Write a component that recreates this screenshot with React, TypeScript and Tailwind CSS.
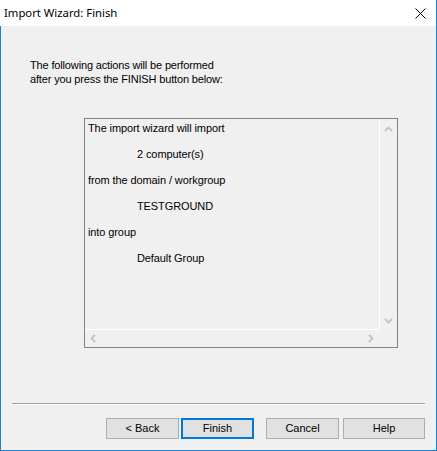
import React from 'react';

const ui = { fontFamily: '"Liberation Sans", Arial, sans-serif' };

const Chevron: React.FC<{ dir: 'up' | 'down' | 'left' | 'right' }> = ({ dir }) => {
  const pts: Record<string, string> = {
    up: '1,6 4.5,2.5 8,6',
    down: '1,3 4.5,6.5 8,3',
    left: '6,1 2.5,4.5 6,8',
    right: '3,1 6.5,4.5 3,8',
  };
  return (
    <svg width="9" height="9" viewBox="0 0 9 9" className="block">
      <polyline points={pts[dir]} fill="none" stroke="#c3c3c3" strokeWidth="1.8" />
    </svg>
  );
};

const rows: { text: string; indent?: boolean }[] = [
  { text: 'The import wizard will import' },
  { text: '' },
  { text: '2 computer(s)', indent: true },
  { text: '' },
  { text: 'from the domain / workgroup' },
  { text: '' },
  { text: 'TESTGROUND', indent: true },
  { text: '' },
  { text: 'into group' },
  { text: '' },
  { text: 'Default Group', indent: true },
];

const WizButton: React.FC<{ label: string; primary?: boolean; wide?: boolean }> = ({ label, primary, wide }) => (
  <button
    className={
      'h-[21px] flex items-center justify-center text-[11px] text-black bg-[#e1e1e1] ' +
      (wide ? 'w-[82px] ' : 'w-[73px] ') +
      (primary ? 'border-2 border-[#0078d7]' : 'border border-[#adadad]')
    }
    style={ui}
  >
    {label}
  </button>
);

export default function App() {
  return (
    <div className="w-[437px] h-[451px] flex flex-col bg-white" style={ui}>
      <div className="h-[26px] flex items-center justify-between pl-[4px] pr-[10px] border-r border-[#1883d7]">
        <span className="text-[11.3px] text-black" style={{ fontFamily: '"Noto Sans", "Open Sans", sans-serif' }}>
          Import Wizard: Finish
        </span>
        <svg width="11" height="11" viewBox="0 0 11 11" className="block">
          <path d="M0.5 0.5 L10.5 10.5 M10.5 0.5 L0.5 10.5" stroke="#000" strokeWidth="1" />
        </svg>
      </div>

      <div className="flex-1 flex flex-col bg-[#f0f0f0] border-x border-b border-[#1883d7]">
        <div className="mt-[32px] pl-[29px] text-[11px] leading-[14px] tracking-[-0.15px] text-black">
          <p>The following actions will be performed</p>
          <p>after you press the FINISH button below:</p>
        </div>

        <div className="mt-[32px] ml-[83px] w-[314px] h-[230px] border border-[#828282] grid grid-cols-[1fr_18px] grid-rows-[1fr_18px]">
          <div className="pt-[3px] pl-[3px] text-[11px] leading-[13px] tracking-[-0.1px] text-black">
            {rows.map((r, i) => (
              <div key={i} className={'h-[13px] whitespace-nowrap ' + (r.indent ? 'pl-[49px]' : '')}>
                {r.text}
              </div>
            ))}
          </div>
          <div className="border-l border-white flex flex-col items-center justify-between pt-[6px] pb-[4px]">
            <Chevron dir="up" />
            <Chevron dir="down" />
          </div>
          <div className="border-t border-white flex items-center justify-between pl-[4px] pr-[4px]">
            <Chevron dir="left" />
            <Chevron dir="right" />
          </div>
          <div />
        </div>

        <div className="mt-[55px] mx-[11px] border-t border-[#a0a0a0] border-b border-b-white" />

        <div className="mt-[13px] flex pl-[105px]">
          <WizButton label="< Back" />
          <div className="ml-[2px]">
            <WizButton label="Finish" primary />
          </div>
          <div className="ml-[12px]">
            <WizButton label="Cancel" />
          </div>
          <div className="ml-[4px]">
            <WizButton label="Help" wide />
          </div>
        </div>
      </div>
    </div>
  );
}
